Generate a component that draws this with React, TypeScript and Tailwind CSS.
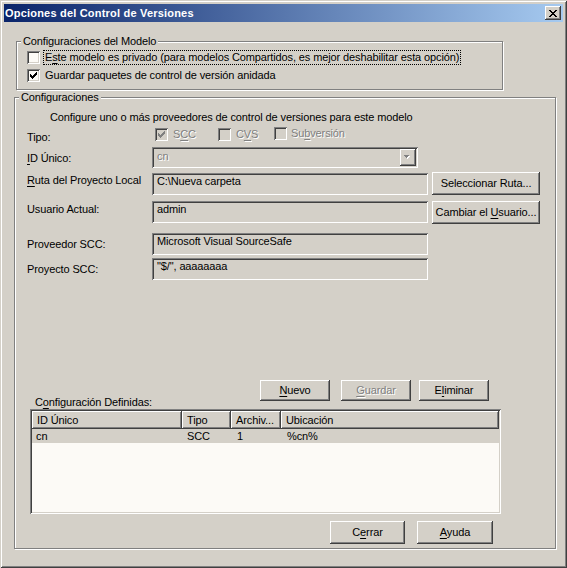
import React from 'react';

// classic win2k bevels
const raised =
  'shadow-[inset_-1px_-1px_0_#404040,inset_1px_1px_0_#fff,inset_-2px_-2px_0_#808080,inset_2px_2px_0_#d4d0c8]';
const sunken =
  'shadow-[inset_1px_1px_0_#808080,inset_-1px_-1px_0_#fff,inset_2px_2px_0_#404040,inset_-2px_-2px_0_#d4d0c8]';
const disabledText = 'text-[#808080] [text-shadow:1px_1px_0_#fff]';

function U({children}: {children: React.ReactNode}) {
  return <span className="underline underline-offset-[2px] decoration-1">{children}</span>;
}

function Check({checked, disabled}: {checked?: boolean; disabled?: boolean}) {
  return (
    <div
      className={`w-[13px] h-[13px] shrink-0 flex items-center justify-center ${sunken} ${
        disabled ? 'bg-[#d4d0c8]' : 'bg-[#fcfaf6]'
      }`}
    >
      {checked && (
        <svg width="7" height="7" viewBox="0 0 7 7" shapeRendering="crispEdges">
          <path
            d="M6 0h1v1h-1z M5 1h2v1h-2z M0 2h1v1h-1z M4 2h3v1h-3z M0 3h2v1h-2z M3 3h3v1h-3z M0 4h5v1h-5z M1 5h3v1h-3z M2 6h1v1h-1z"
            fill={disabled ? '#808080' : '#000'}
          />
        </svg>
      )}
    </div>
  );
}

function Btn({
  children,
  className,
  disabled,
}: {
  children: React.ReactNode;
  className: string;
  disabled?: boolean;
}) {
  return (
    <div
      className={`shrink-0 flex items-center justify-center bg-[#d4d0c8] ${raised} ${className} ${
        disabled ? disabledText : 'text-black'
      }`}
    >
      <span className="leading-[13px]">{children}</span>
    </div>
  );
}

function Field({children}: {children: React.ReactNode}) {
  return (
    <div className={`w-[276px] h-[22px] shrink-0 bg-[#d4d0c8] ${sunken} pt-[2px] pl-[5px] leading-[13px]`}>
      {children}
    </div>
  );
}

function Group({
  label,
  className,
  children,
}: {
  label: string;
  className: string;
  children: React.ReactNode;
}) {
  return (
    <div
      className={`relative shrink-0 border border-[#808080] shadow-[1px_1px_0_#fff,inset_1px_1px_0_#fff] ${className}`}
    >
      <div className="absolute left-[4px] -top-[7px] px-[2px] bg-[#d4d0c8] leading-[13px]">{label}</div>
      {children}
    </div>
  );
}

function HeadCell({children, className}: {children: React.ReactNode; className: string}) {
  return (
    <div className={`h-[18px] flex items-center pl-[5px] bg-[#d4d0c8] ${raised} ${className}`}>
      <span className="leading-[13px] whitespace-nowrap">{children}</span>
    </div>
  );
}

export default function App() {
  return (
    <div
      className={`w-[567px] h-[568px] bg-[#d4d0c8] p-[4px] flex flex-col font-['Liberation_Sans',Arial,sans-serif] text-[11px] tracking-[-0.12px] text-black shadow-[inset_1px_1px_0_#d4d0c8,inset_-1px_-1px_0_#404040,inset_2px_2px_0_#fff,inset_-2px_-2px_0_#808080]`}
    >
      {/* Title bar */}
      <div className="h-[18px] shrink-0 flex items-center justify-between pl-[1px] pr-[2px] bg-[linear-gradient(to_right,#0a246a,#a6caf0)]">
        <span className="text-white font-bold leading-[13px] tracking-[0.2px]">Opciones del Control de Versiones</span>
        <div className={`w-[16px] h-[14px] flex items-center justify-center bg-[#d4d0c8] ${raised}`}>
          <svg width="8" height="7" viewBox="0 0 8 7" shapeRendering="crispEdges">
            <path
              d="M0 0h2v1h-2z M6 0h2v1h-2z M1 1h2v1h-2z M5 1h2v1h-2z M2 2h4v1h-4z M3 3h2v1h-2z M2 4h4v1h-4z M1 5h2v1h-2z M5 5h2v1h-2z M0 6h2v1h-2z M6 6h2v1h-2z"
              fill="#000"
            />
          </svg>
        </div>
      </div>

      {/* Body */}
      <div className="flex flex-col">
        <Group label="Configuraciones del Modelo" className="ml-[12px] mt-[19px] w-[487px] h-[49px]">
          <div className="flex flex-col gap-[5px] pl-[10px] pt-[9px]">
            <div className="flex items-center h-[13px]">
              <Check />
              <span className="ml-[4px] px-[1px] leading-[13px] outline outline-1 outline-dotted outline-black">
                E<U>s</U>te modelo es privado (para modelos Compartidos, es mejor deshabilitar esta opción)
              </span>
            </div>
            <div className="flex items-center h-[13px]">
              <Check checked />
              <span className="ml-[5px] leading-[13px]">Guardar paquetes de control de versión anidada</span>
            </div>
          </div>
        </Group>

        <Group label="Configuraciones" className="ml-[10px] mt-[7px] w-[542px] h-[452px]">
          <div className="flex flex-col">
            <div className="mt-[13px] ml-[35px] leading-[13px]">
              Configure uno o más proveedores de control de versiones para este modelo
            </div>

            {/* Tipo */}
            <div className="mt-[4px] ml-[12px] flex items-center h-[13px]">
              <div className="w-[128px] leading-[13px] mt-[5px]">Tipo:</div>
              <div className="w-[63px] flex items-center">
                <Check checked disabled />
                <span className={`ml-[5px] leading-[13px] ${disabledText}`}>
                  S<U>C</U>C
                </span>
              </div>
              <div className="w-[56px] flex items-center">
                <Check disabled />
                <span className={`ml-[5px] leading-[13px] ${disabledText}`}>
                  C<U>V</U>S
                </span>
              </div>
              <div className="flex items-center -mt-[2px]">
                <Check disabled />
                <span className={`ml-[4px] leading-[13px] ${disabledText}`}>
                  Su<U>b</U>versión
                </span>
              </div>
            </div>

            {/* ID Unico */}
            <div className="mt-[6px] ml-[12px] flex items-center">
              <div className="w-[125px] leading-[13px] mt-[1px]">
                <U>I</U>D Único:
              </div>
              <div className={`w-[266px] h-[21px] p-[2px] flex bg-[#d4d0c8] ${sunken}`}>
                <div className={`flex-1 pl-[3px] pt-[1px] leading-[13px] ${disabledText}`}>cn</div>
                <div className={`w-[16px] h-[17px] flex items-center justify-center ${raised}`}>
                  <svg width="8" height="5" viewBox="0 0 8 5" shapeRendering="crispEdges">
                    <path d="M1 1h5v1h-5z M2 2h3v1h-3z M3 3h1v1h-1z" fill="#fff" />
                    <path d="M0 0h5v1h-5z M1 1h3v1h-3z M2 2h1v1h-1z" fill="#808080" />
                  </svg>
                </div>
              </div>
            </div>

            {/* Ruta */}
            <div className="mt-[4px] ml-[12px] flex items-start">
              <div className="w-[125px] leading-[13px] mt-[2px]">
                <U>R</U>uta del Proyecto Local
              </div>
              <div className="mt-[1px]">
                <Field>C:\Nueva carpeta</Field>
              </div>
              <Btn className="ml-[4px] w-[108px] h-[23px]">Seleccionar Ruta...</Btn>
            </div>

            {/* Usuario */}
            <div className="mt-[6px] ml-[12px] flex items-start">
              <div className="w-[125px] leading-[13px] mt-[2px]">Usuario Actual:</div>
              <div className="mt-[0px]">
                <Field>admin</Field>
              </div>
              <Btn className="ml-[4px] w-[108px] h-[23px]">
                Cambiar el <U>U</U>suario...
              </Btn>
            </div>

            {/* Proveedor */}
            <div className="mt-[9px] ml-[12px] flex items-center">
              <div className="w-[125px] leading-[13px] mt-[1px]">Proveedor SCC:</div>
              <Field>Microsoft Visual SourceSafe</Field>
            </div>

            {/* Proyecto */}
            <div className="mt-[3px] ml-[12px] flex items-center">
              <div className="w-[125px] leading-[13px] mt-[1px]">Proyecto SCC:</div>
              <Field>"$/", aaaaaaaa</Field>
            </div>

            {/* list buttons */}
            <div className="mt-[100px] ml-[20px] flex items-start">
              <div className="w-[225px] shrink-0 mt-[16px] leading-[13px]">
                C<U>o</U>nfiguración Definidas:
              </div>
              <Btn className="w-[70px] h-[21px]">
                <U>N</U>uevo
              </Btn>
              <Btn disabled className="ml-[11px] w-[70px] h-[21px]">
                <U>G</U>uardar
              </Btn>
              <Btn className="ml-[8px] w-[70px] h-[21px]">
                E<U>l</U>iminar
              </Btn>
            </div>

            {/* list view */}
            <div className={`ml-[15px] mt-[0px] w-[471px] h-[105px] p-[2px] flex flex-col bg-[#fcfaf6] ${sunken}`}>
              <div className="flex shrink-0">
                <HeadCell className="w-[150px]">ID Único</HeadCell>
                <HeadCell className="w-[49px]">Tipo</HeadCell>
                <HeadCell className="w-[50px]">Archiv...</HeadCell>
                <HeadCell className="flex-1">Ubicación</HeadCell>
              </div>
              <div className="flex h-[14px] items-center bg-[#d4d0c8] leading-[13px]">
                <div className="w-[150px] pl-[4px]">cn</div>
                <div className="w-[49px] pl-[5px]">SCC</div>
                <div className="w-[50px] pl-[6px]">1</div>
                <div className="flex-1 pl-[6px]">%cn%</div>
              </div>
            </div>

            {/* bottom buttons */}
            <div className="mt-[7px] ml-[315px] flex">
              <Btn className="w-[75px] h-[23px]">
                C<U>e</U>rrar
              </Btn>
              <Btn className="ml-[12px] w-[76px] h-[23px]">
                <U>A</U>yuda
              </Btn>
            </div>
          </div>
        </Group>
      </div>
    </div>
  );
}
